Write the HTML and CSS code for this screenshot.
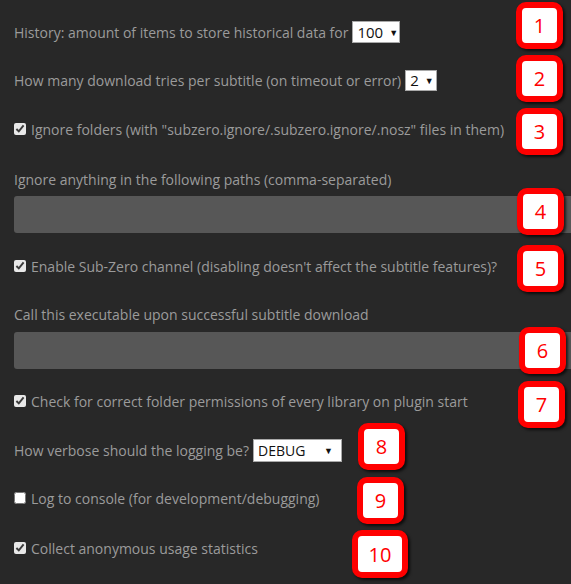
FILE: index.html
```html
<!DOCTYPE html>
<html>
<head>
<meta charset="utf-8">
<link rel="stylesheet" href="styles.css">
</head>
<body>
<div class="page">
  <div class="row r1">History: amount of items to store historical data for <span class="select s100"><span class="val">100</span><span class="arrow">▼</span></span></div>
  <div class="row r2">How many download tries per subtitle (on timeout or error) <span class="select s2"><span class="val">2</span><span class="arrow">▼</span></span></div>
  <div class="row r3"><input type="checkbox" class="cb" checked> <span>Ignore folders (with "subzero.ignore/.subzero.ignore/.nosz" files in them)</span></div>
  <div class="row r4">Ignore anything in the following paths (comma-separated)</div>
  <div class="textfield t4"></div>
  <div class="row r5"><input type="checkbox" class="cb" checked> <span>Enable Sub-Zero channel (disabling doesn't affect the subtitle features)?</span></div>
  <div class="row r6">Call this executable upon successful subtitle download</div>
  <div class="textfield t6"></div>
  <div class="row r7"><input type="checkbox" class="cb" checked> <span>Check for correct folder permissions of every library on plugin start</span></div>
  <div class="row r8">How verbose should the logging be? <span class="select sdebug"><span class="val">DEBUG</span><span class="arrow">▼</span></span></div>
  <div class="row r9"><input type="checkbox" class="cb"> <span>Log to console (for development/debugging)</span></div>
  <div class="row r10"><input type="checkbox" class="cb" checked> <span>Collect anonymous usage statistics</span></div>

  <div class="badge b1">1</div>
  <div class="badge b2">2</div>
  <div class="badge b3">3</div>
  <div class="badge b4">4</div>
  <div class="badge b5">5</div>
  <div class="badge b6">6</div>
  <div class="badge b7">7</div>
  <div class="badge b8">8</div>
  <div class="badge b9">9</div>
  <div class="badge b10">10</div>
</div>
</body>
</html>
```
FILE: styles.css
```css
html, body {
  margin: 0;
  padding: 0;
  background: #282828;
  overflow: hidden;
}
.page {
  position: relative;
  width: 571px;
  height: 584px;
  padding: 21px 0 0 14px;
  box-sizing: border-box;
  font-family: "Open Sans", sans-serif;
  font-size: 14px;
  color: #9b9b9b;
}
.row {
  height: 22px;
  display: flex;
  align-items: center;
  white-space: nowrap;
}
.r2 { margin-top: 26px; }
.r3 { margin-top: 27px; }
.r4 { margin-top: 28px; }
.r5 { margin-top: 22px; }
.r6 { margin-top: 26px; }
.r7 { margin-top: 21px; }
.r8 { margin-top: 27px; }
.r9 { margin-top: 26px; }
.r10 { margin-top: 28px; }
.cb {
  width: 12px;
  height: 12px;
  margin: 0 5px 0 0;
  accent-color: #e8e8e8;
}
.select {
  display: inline-flex;
  align-items: center;
  justify-content: space-between;
  box-sizing: border-box;
  height: 22px;
  margin-left: 4px;
  padding: 0 6px 0 4px;
  background: #fff;
  border: 1px solid #a9a9a9;
  color: #111;
  font-size: 15px;
}
.s100 { width: 48px; }
.s2 { width: 32px; height: 21px; }
.sdebug { width: 89px; height: 23px; font-size: 14px; padding-right: 8px; }
.arrow { font-size: 9px; margin-left: 6px; }
.textfield {
  height: 37px;
  margin-right: -14px;
  background: #575757;
  border-radius: 3px 0 0 3px;
}
.t4 { margin-top: 6px; }
.t6 { margin-top: 7px; }
.badge {
  position: absolute;
  width: 47px;
  height: 47px;
  box-sizing: border-box;
  border: 6px solid #ff0000;
  border-radius: 10px;
  background: #fff;
  box-shadow: 2px 2px 3px rgba(0,0,0,0.7);
  color: #ff0000;
  font-family: "Open Sans", sans-serif;
  font-size: 20px;
  display: flex;
  align-items: center;
  justify-content: center;
}
.b1 { left: 516px; top: 2px; }
.b2 { left: 516px; top: 55px; }
.b3 { left: 516px; top: 108px; }
.b4 { left: 517px; top: 188px; }
.b5 { left: 517px; top: 245px; }
.b6 { left: 519px; top: 327px; }
.b7 { left: 518px; top: 381px; }
.b8 { left: 358px; top: 423px; }
.b9 { left: 357px; top: 477px; }
.b10 { left: 352px; top: 530px; width: 56px; height: 48px; }
```
